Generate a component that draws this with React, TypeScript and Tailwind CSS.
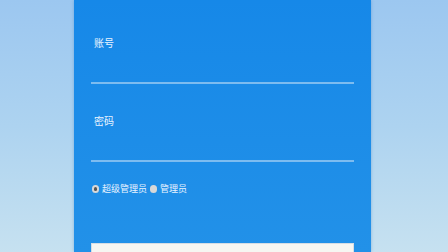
import React, { useState } from 'react';

const font = { fontFamily: '"Noto Sans CJK SC", "Noto Sans", sans-serif' };

function Field({ label, type, top }: { label: string; type: string; top: string }) {
  return (
    <div className={`${top} flex flex-col`}>
      <div className="pl-[3px] h-[16px] text-[10px] leading-[16px] text-[#eaf4ff]">{label}</div>
      <div className="h-[33px] flex border-b-2 border-[#7dbcf0]">
        <input type={type} className="w-full bg-transparent outline-none text-white text-[10px]" />
      </div>
    </div>
  );
}

export default function App() {
  const [role, setRole] = useState<'super' | 'admin'>('super');

  return (
    <div
      className="w-full h-[252px] overflow-hidden flex bg-gradient-to-b from-[#9cc7f0] via-[#add3f0] to-[#c6e1f0]"
      style={font}
    >
      <div className="ml-[74px] w-[297px] h-full shrink-0 bg-gradient-to-b from-[#1688e8] to-[#2291e8] shadow-[0_0_3px_rgba(30,100,180,0.35)] px-[17px] flex flex-col">
        <Field label="账号" type="text" top="pt-[35px]" />
        <Field label="密码" type="password" top="pt-[29px]" />

        {/* Role */}
        <div className="mt-[20px] h-[14px] shrink-0 flex items-center text-[9px] leading-[14px] text-[#eaf4ff]">
          <button onClick={() => setRole('super')} className="flex items-center gap-[3px] pl-[1px]">
            <span className="w-[7px] h-[8px] rounded-full bg-[#d8d8d8] flex items-center justify-center">
              {role === 'super' && <span className="w-[3px] h-[4px] rounded-full bg-[#555]" />}
            </span>
            超级管理员
          </button>
          <button onClick={() => setRole('admin')} className="ml-[3px] flex items-center gap-[3px]">
            <span className="w-[7px] h-[8px] rounded-full bg-[#d8d8d8] flex items-center justify-center">
              {role === 'admin' && <span className="w-[3px] h-[4px] rounded-full bg-[#555]" />}
            </span>
            管理员
          </button>
        </div>

        {/* Login button (cut off at the bottom edge) */}
        <button
          aria-label="登录"
          className="mt-[47px] h-[44px] shrink-0 bg-[#f6f6f2] border border-[#d6dde4]"
        />
      </div>
    </div>
  );
}
